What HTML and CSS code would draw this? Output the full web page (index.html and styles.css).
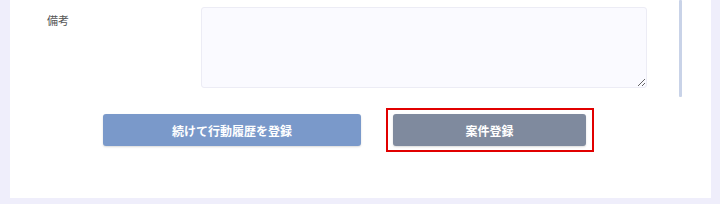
FILE: index.html
```html
<!DOCTYPE html>
<html lang="ja">
<head>
    <meta charset="UTF-8">
    <title>案件登録</title>
    <link rel="stylesheet" href="styles.css">
</head>
<body>

<div class="card">
    <div class="scroll-track"></div>
    <div class="form-row">
        <div class="form-label">備考</div>
        <textarea class="form-textarea"></textarea>
    </div>
    <div class="btn-row">
        <button class="btn btn-continue">続けて行動履歴を登録</button>
        <div class="highlight">
            <button class="btn btn-submit">案件登録</button>
        </div>
    </div>
</div>

</body>
</html>
```

FILE: styles.css
```css
body {
    margin: 0;
    background-color: #efeefb;
    font-family: 'Noto Sans CJK JP', 'Noto Sans', sans-serif;
}
.card {
    position: relative;
    margin-left: 10px;
    width: 701px;
    height: 198px;
    background-color: #ffffff;
}
.scroll-track {
    position: absolute;
    left: 669px;
    top: 0;
    width: 3px;
    height: 97px;
    background-color: #c9d3e8;
    border-radius: 1px;
}
.form-row {
    display: flex;
    padding-top: 7px;
}
.form-label {
    width: 154px;
    padding-left: 37px;
    padding-top: 5px;
    font-size: 11px;
    color: #555;
}
.form-textarea {
    width: 446px;
    height: 81px;
    box-sizing: border-box;
    background-color: #fafaff;
    border: 1px solid #ececf5;
    border-radius: 3px;
    margin: 0;
}
.btn-row {
    display: flex;
    align-items: center;
    padding-top: 20px;
    padding-left: 93px;
    gap: 25px;
}
.btn {
    height: 32px;
    border: none;
    border-radius: 3px;
    color: #ffffff;
    font-family: inherit;
    font-size: 12px;
    font-weight: bold;
    box-shadow: 0 1px 2px rgba(0, 0, 0, 0.15);
}
.btn-continue {
    width: 258px;
    background-color: #7a99ca;
}
.highlight {
    display: flex;
    padding: 4px 6px 4px 5px;
    border: 2px solid #e10000;
}
.btn-submit {
    width: 193px;
    background-color: #7f8a9e;
}
```
